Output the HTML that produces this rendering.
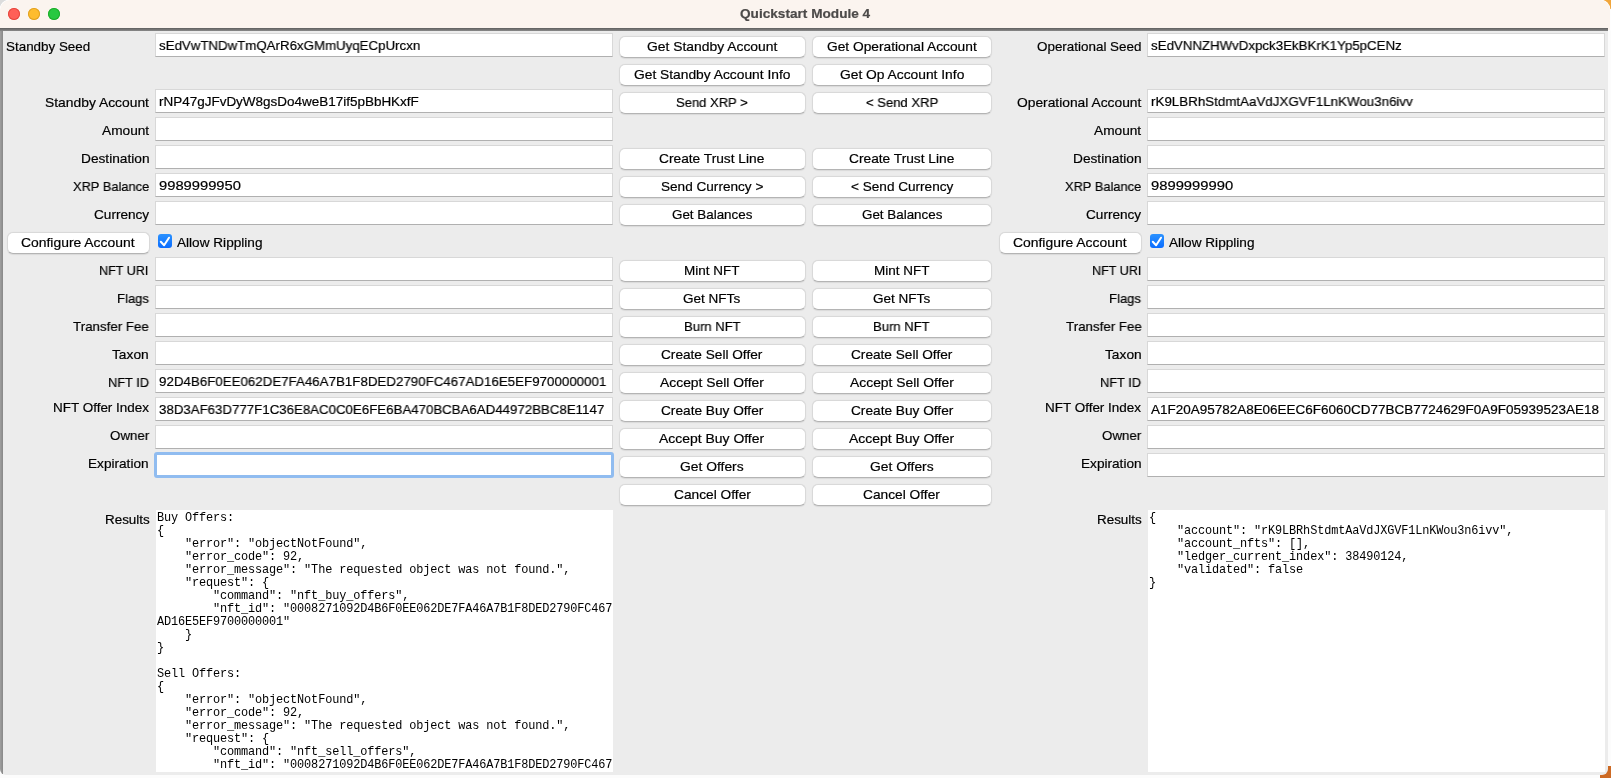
<!DOCTYPE html><html><head><meta charset="utf-8"><style>
*{margin:0;padding:0;box-sizing:border-box}
html,body{width:1611px;height:778px;overflow:hidden;background:#fcfcfc}
body{position:relative;font-family:"Liberation Sans",sans-serif;color:#000}
.a{position:absolute}
.t{position:absolute;line-height:normal;white-space:nowrap;transform-origin:0 0;will-change:transform;-webkit-text-stroke:0.2px currentColor}
.ent{position:absolute;height:24px;width:458px;background:#fff;border:1px solid #d8d8d8;border-bottom-color:#b0b0b0}
.btn{position:absolute;height:22px;background:#fff;border:1px solid #d9d9d9;border-bottom-color:#b4b4b4;border-radius:6px;box-shadow:0 0.5px 1px rgba(0,0,0,0.08)}
.mono{position:absolute;font-family:"Liberation Mono",monospace;font-size:11.9px;line-height:13px;white-space:pre;color:#000;overflow:hidden;will-change:transform}
</style></head><body>
<div class="a" style="left:1600px;top:0;width:11px;height:9px;background:#f1a63c"></div>
<div class="a" style="left:1600px;top:766px;width:11px;height:12px;background:#cd6a24"></div>
<div class="a" style="left:0;top:0;width:14px;height:14px;background:#dcdcdc"></div>
<div class="a" style="left:0;top:0;width:1610px;height:30px;background:#fbf4ef;border-radius:10px 10px 0 0;box-shadow:0 0 0 0.5px #fff"></div>
<div class="a" style="left:0;top:26px;width:1608px;height:749px;background:#ececec;border-radius:0 0 6px 6px;overflow:hidden">
<div class="a" style="left:0;top:0;width:1608px;height:2px;background:#fbf4ef"></div>
<div class="a" style="left:0;top:2px;width:1608px;height:3px;background:linear-gradient(#5e5e5e,#8a8a8a)"></div>
<div class="a" style="left:0;top:5px;width:3px;height:744px;background:linear-gradient(90deg,#a0a0a0,#888)"></div>
</div>
<div class="a" style="left:8px;top:8px;width:12px;height:12px;border-radius:50%;background:#ff5f57;box-shadow:inset 0 0 0 1px #e5483f"></div>
<div class="a" style="left:28px;top:8px;width:12px;height:12px;border-radius:50%;background:#febc2e;box-shadow:inset 0 0 0 1px #e0a123"></div>
<div class="a" style="left:48px;top:8px;width:12px;height:12px;border-radius:50%;background:#28c840;box-shadow:inset 0 0 0 1px #1dad2b"></div>
<div class="t" style="left:740.10px;top:6px;font-size:13px;font-weight:bold;color:#4c4a49;transform:scale(1.0479,1);transform-origin:0 11.77px;">Quickstart Module 4</div>
<div class="t" style="left:6.20px;top:39px;font-size:13.4px;color:#000;transform:scale(1.0014,1);transform-origin:0 12.13px;">Standby Seed</div>
<div class="ent" style="left:155px;top:33px"></div>
<div class="t" style="left:158.90px;top:38px;font-size:13.4px;color:#000;transform:scale(0.9917,1);transform-origin:0 12.13px;">sEdVwTNDwTmQArR6xGMmUyqECpUrcxn</div>
<div class="t" style="left:44.80px;top:95px;font-size:13.4px;color:#000;transform:scale(1.0341,1);transform-origin:0 12.13px;">Standby Account</div>
<div class="ent" style="left:155px;top:89px"></div>
<div class="t" style="left:158.90px;top:94px;font-size:13.4px;color:#000;transform:scale(1.0061,1);transform-origin:0 12.13px;">rNP47gJFvDyW8gsDo4weB17if5pBbHKxfF</div>
<div class="t" style="left:102.00px;top:123px;font-size:13.4px;color:#000;transform:scale(1.0217,1);transform-origin:0 12.13px;">Amount</div>
<div class="ent" style="left:155px;top:117px"></div>
<div class="t" style="left:80.90px;top:151px;font-size:13.4px;color:#000;transform:scale(1.0234,1);transform-origin:0 12.13px;">Destination</div>
<div class="ent" style="left:155px;top:145px"></div>
<div class="t" style="left:73.10px;top:179px;font-size:13.4px;color:#000;transform:scale(0.9602,1);transform-origin:0 12.13px;">XRP Balance</div>
<div class="ent" style="left:155px;top:173px"></div>
<div class="t" style="left:158.90px;top:178px;font-size:13.4px;color:#000;transform:scale(1.1001,1);transform-origin:0 12.13px;">9989999950</div>
<div class="t" style="left:94.00px;top:207px;font-size:13.4px;color:#000;transform:scale(1.0153,1);transform-origin:0 12.13px;">Currency</div>
<div class="ent" style="left:155px;top:201px"></div>
<div class="t" style="left:99.30px;top:263px;font-size:13.4px;color:#000;transform:scale(0.9393,1);transform-origin:0 12.13px;">NFT URI</div>
<div class="ent" style="left:155px;top:257px"></div>
<div class="t" style="left:117.00px;top:291px;font-size:13.4px;color:#000;transform:scale(0.9767,1);transform-origin:0 12.13px;">Flags</div>
<div class="ent" style="left:155px;top:285px"></div>
<div class="t" style="left:73.20px;top:319px;font-size:13.4px;color:#000;transform:scale(0.9946,1);transform-origin:0 12.13px;">Transfer Fee</div>
<div class="ent" style="left:155px;top:313px"></div>
<div class="t" style="left:112.30px;top:347px;font-size:13.4px;color:#000;transform:scale(1.0267,1);transform-origin:0 12.13px;">Taxon</div>
<div class="ent" style="left:155px;top:341px"></div>
<div class="t" style="left:107.90px;top:375px;font-size:13.4px;color:#000;transform:scale(0.9570,1);transform-origin:0 12.13px;">NFT ID</div>
<div class="ent" style="left:155px;top:369px"></div>
<div class="t" style="left:158.90px;top:374px;font-size:13.4px;color:#000;transform:scale(0.9947,1);transform-origin:0 12.13px;">92D4B6F0EE062DE7FA46A7B1F8DED2790FC467AD16E5EF9700000001</div>
<div class="t" style="left:52.90px;top:400px;font-size:13.4px;color:#000;transform:scale(1.0055,1);transform-origin:0 12.13px;">NFT Offer Index</div>
<div class="ent" style="left:155px;top:397px"></div>
<div class="t" style="left:158.90px;top:402px;font-size:13.4px;color:#000;transform:scale(0.9907,1);transform-origin:0 12.13px;">38D3AF63D777F1C36E8AC0C0E6FE6BA470BCBA6AD44972BBC8E1147</div>
<div class="t" style="left:109.80px;top:428px;font-size:13.4px;color:#000;transform:scale(0.9933,1);transform-origin:0 12.13px;">Owner</div>
<div class="ent" style="left:155px;top:425px"></div>
<div class="t" style="left:88.40px;top:456px;font-size:13.4px;color:#000;transform:scale(1.0168,1);transform-origin:0 12.13px;">Expiration</div>
<div class="a" style="left:154px;top:452px;width:460px;height:26px;border:3px solid #90bcf0;border-radius:3px;background:#fff"></div>
<div class="btn" style="left:7px;top:232px;width:143px"></div>
<div class="t" style="left:20.80px;top:235px;font-size:13.4px;color:#000;transform:scale(1.0373,1);transform-origin:0 12.13px;">Configure Account</div>
<div class="a" style="left:158px;top:234px;width:14px;height:14px;border-radius:3px;background:linear-gradient(#2b92ff,#0a6cff)"></div>
<svg class="a" style="left:158px;top:234px" width="14" height="14" viewBox="0 0 14 14"><path d="M2.8 7.8 L6.1 11.3 L11.0 3.7" fill="none" stroke="#fff" stroke-width="2" stroke-linecap="round" stroke-linejoin="round"/></svg>
<div class="t" style="left:176.80px;top:235px;font-size:13.4px;color:#000;transform:scale(1.0160,1);transform-origin:0 12.13px;">Allow Rippling</div>
<div class="t" style="left:104.60px;top:512px;font-size:13.4px;color:#000;transform:scale(1.0025,1);transform-origin:0 12.13px;">Results</div>
<div class="a" style="left:156px;top:510px;width:457px;height:262px;background:#fff;overflow:hidden"><div class="mono" style="left:1px;top:2.0px;letter-spacing:-0.130px">Buy Offers:
{
    &quot;error&quot;: &quot;objectNotFound&quot;,
    &quot;error_code&quot;: 92,
    &quot;error_message&quot;: &quot;The requested object was not found.&quot;,
    &quot;request&quot;: {
        &quot;command&quot;: &quot;nft_buy_offers&quot;,
        &quot;nft_id&quot;: &quot;0008271092D4B6F0EE062DE7FA46A7B1F8DED2790FC467
AD16E5EF9700000001&quot;
    }
}

Sell Offers:
{
    &quot;error&quot;: &quot;objectNotFound&quot;,
    &quot;error_code&quot;: 92,
    &quot;error_message&quot;: &quot;The requested object was not found.&quot;,
    &quot;request&quot;: {
        &quot;command&quot;: &quot;nft_sell_offers&quot;,
        &quot;nft_id&quot;: &quot;0008271092D4B6F0EE062DE7FA46A7B1F8DED2790FC467</div></div>
<div class="t" style="left:1037.00px;top:39px;font-size:13.4px;color:#000;transform:scale(1.0021,1);transform-origin:0 12.13px;">Operational Seed</div>
<div class="ent" style="left:1147px;top:33px"></div>
<div class="t" style="left:1150.90px;top:38px;font-size:13.4px;color:#000;transform:scale(0.9920,1);transform-origin:0 12.13px;">sEdVNNZHWvDxpck3EkBKrK1Yp5pCENz</div>
<div class="t" style="left:1016.70px;top:95px;font-size:13.4px;color:#000;transform:scale(1.0309,1);transform-origin:0 12.13px;">Operational Account</div>
<div class="ent" style="left:1147px;top:89px"></div>
<div class="t" style="left:1150.90px;top:94px;font-size:13.4px;color:#000;transform:scale(0.9974,1);transform-origin:0 12.13px;">rK9LBRhStdmtAaVdJXGVF1LnKWou3n6ivv</div>
<div class="t" style="left:1094.30px;top:123px;font-size:13.4px;color:#000;transform:scale(1.0217,1);transform-origin:0 12.13px;">Amount</div>
<div class="ent" style="left:1147px;top:117px"></div>
<div class="t" style="left:1073.20px;top:151px;font-size:13.4px;color:#000;transform:scale(1.0234,1);transform-origin:0 12.13px;">Destination</div>
<div class="ent" style="left:1147px;top:145px"></div>
<div class="t" style="left:1065.40px;top:179px;font-size:13.4px;color:#000;transform:scale(0.9602,1);transform-origin:0 12.13px;">XRP Balance</div>
<div class="ent" style="left:1147px;top:173px"></div>
<div class="t" style="left:1150.90px;top:178px;font-size:13.4px;color:#000;transform:scale(1.1028,1);transform-origin:0 12.13px;">9899999990</div>
<div class="t" style="left:1086.30px;top:207px;font-size:13.4px;color:#000;transform:scale(1.0153,1);transform-origin:0 12.13px;">Currency</div>
<div class="ent" style="left:1147px;top:201px"></div>
<div class="t" style="left:1091.60px;top:263px;font-size:13.4px;color:#000;transform:scale(0.9393,1);transform-origin:0 12.13px;">NFT URI</div>
<div class="ent" style="left:1147px;top:257px"></div>
<div class="t" style="left:1109.30px;top:291px;font-size:13.4px;color:#000;transform:scale(0.9767,1);transform-origin:0 12.13px;">Flags</div>
<div class="ent" style="left:1147px;top:285px"></div>
<div class="t" style="left:1065.50px;top:319px;font-size:13.4px;color:#000;transform:scale(0.9946,1);transform-origin:0 12.13px;">Transfer Fee</div>
<div class="ent" style="left:1147px;top:313px"></div>
<div class="t" style="left:1104.60px;top:347px;font-size:13.4px;color:#000;transform:scale(1.0267,1);transform-origin:0 12.13px;">Taxon</div>
<div class="ent" style="left:1147px;top:341px"></div>
<div class="t" style="left:1100.20px;top:375px;font-size:13.4px;color:#000;transform:scale(0.9570,1);transform-origin:0 12.13px;">NFT ID</div>
<div class="ent" style="left:1147px;top:369px"></div>
<div class="t" style="left:1045.20px;top:400px;font-size:13.4px;color:#000;transform:scale(1.0055,1);transform-origin:0 12.13px;">NFT Offer Index</div>
<div class="ent" style="left:1147px;top:397px"></div>
<div class="t" style="left:1150.90px;top:402px;font-size:13.4px;color:#000;transform:scale(1.0062,1);transform-origin:0 12.13px;">A1F20A95782A8E06EEC6F6060CD77BCB7724629F0A9F05939523AE18</div>
<div class="t" style="left:1102.10px;top:428px;font-size:13.4px;color:#000;transform:scale(0.9933,1);transform-origin:0 12.13px;">Owner</div>
<div class="ent" style="left:1147px;top:425px"></div>
<div class="t" style="left:1080.70px;top:456px;font-size:13.4px;color:#000;transform:scale(1.0168,1);transform-origin:0 12.13px;">Expiration</div>
<div class="ent" style="left:1147px;top:453px"></div>
<div class="btn" style="left:999px;top:232px;width:143px"></div>
<div class="t" style="left:1012.80px;top:235px;font-size:13.4px;color:#000;transform:scale(1.0373,1);transform-origin:0 12.13px;">Configure Account</div>
<div class="a" style="left:1150px;top:234px;width:14px;height:14px;border-radius:3px;background:linear-gradient(#2b92ff,#0a6cff)"></div>
<svg class="a" style="left:1150px;top:234px" width="14" height="14" viewBox="0 0 14 14"><path d="M2.8 7.8 L6.1 11.3 L11.0 3.7" fill="none" stroke="#fff" stroke-width="2" stroke-linecap="round" stroke-linejoin="round"/></svg>
<div class="t" style="left:1168.80px;top:235px;font-size:13.4px;color:#000;transform:scale(1.0160,1);transform-origin:0 12.13px;">Allow Rippling</div>
<div class="t" style="left:1096.90px;top:512px;font-size:13.4px;color:#000;transform:scale(1.0025,1);transform-origin:0 12.13px;">Results</div>
<div class="a" style="left:1148px;top:510px;width:457px;height:262px;background:#fff;overflow:hidden"><div class="mono" style="left:1px;top:2.0px;letter-spacing:-0.130px">{
    &quot;account&quot;: &quot;rK9LBRhStdmtAaVdJXGVF1LnKWou3n6ivv&quot;,
    &quot;account_nfts&quot;: [],
    &quot;ledger_current_index&quot;: 38490124,
    &quot;validated&quot;: false
}</div></div>
<div class="btn" style="left:619px;top:36px;width:187px"></div>
<div class="btn" style="left:812px;top:36px;width:180px"></div>
<div class="t" style="left:646.80px;top:39px;font-size:13.4px;color:#000;transform:scale(1.0358,1);transform-origin:0 12.13px;">Get Standby Account</div>
<div class="t" style="left:826.80px;top:39px;font-size:13.4px;color:#000;transform:scale(1.0261,1);transform-origin:0 12.13px;">Get Operational Account</div>
<div class="btn" style="left:619px;top:64px;width:187px"></div>
<div class="btn" style="left:812px;top:64px;width:180px"></div>
<div class="t" style="left:633.75px;top:67px;font-size:13.4px;color:#000;transform:scale(1.0299,1);transform-origin:0 12.13px;">Get Standby Account Info</div>
<div class="t" style="left:839.50px;top:67px;font-size:13.4px;color:#000;transform:scale(1.0309,1);transform-origin:0 12.13px;">Get Op Account Info</div>
<div class="btn" style="left:619px;top:92px;width:187px"></div>
<div class="btn" style="left:812px;top:92px;width:180px"></div>
<div class="t" style="left:676.10px;top:95px;font-size:13.4px;color:#000;transform:scale(0.9720,1);transform-origin:0 12.13px;">Send XRP &gt;</div>
<div class="t" style="left:865.55px;top:95px;font-size:13.4px;color:#000;transform:scale(0.9752,1);transform-origin:0 12.13px;">&lt; Send XRP</div>
<div class="btn" style="left:619px;top:148px;width:187px"></div>
<div class="btn" style="left:812px;top:148px;width:180px"></div>
<div class="t" style="left:659.30px;top:151px;font-size:13.4px;color:#000;transform:scale(1.0255,1);transform-origin:0 12.13px;">Create Trust Line</div>
<div class="t" style="left:849.00px;top:151px;font-size:13.4px;color:#000;transform:scale(1.0255,1);transform-origin:0 12.13px;">Create Trust Line</div>
<div class="btn" style="left:619px;top:176px;width:187px"></div>
<div class="btn" style="left:812px;top:176px;width:180px"></div>
<div class="t" style="left:660.80px;top:179px;font-size:13.4px;color:#000;transform:scale(1.0145,1);transform-origin:0 12.13px;">Send Currency &gt;</div>
<div class="t" style="left:850.50px;top:179px;font-size:13.4px;color:#000;transform:scale(1.0145,1);transform-origin:0 12.13px;">&lt; Send Currency</div>
<div class="btn" style="left:619px;top:204px;width:187px"></div>
<div class="btn" style="left:812px;top:204px;width:180px"></div>
<div class="t" style="left:671.80px;top:207px;font-size:13.4px;color:#000;transform:scale(0.9996,1);transform-origin:0 12.13px;">Get Balances</div>
<div class="t" style="left:861.50px;top:207px;font-size:13.4px;color:#000;transform:scale(0.9996,1);transform-origin:0 12.13px;">Get Balances</div>
<div class="btn" style="left:619px;top:260px;width:187px"></div>
<div class="btn" style="left:812px;top:260px;width:180px"></div>
<div class="t" style="left:684.30px;top:263px;font-size:13.4px;color:#000;transform:scale(1.0059,1);transform-origin:0 12.13px;">Mint NFT</div>
<div class="t" style="left:874.00px;top:263px;font-size:13.4px;color:#000;transform:scale(1.0059,1);transform-origin:0 12.13px;">Mint NFT</div>
<div class="btn" style="left:619px;top:288px;width:187px"></div>
<div class="btn" style="left:812px;top:288px;width:180px"></div>
<div class="t" style="left:683.40px;top:291px;font-size:13.4px;color:#000;transform:scale(1.0109,1);transform-origin:0 12.13px;">Get NFTs</div>
<div class="t" style="left:873.10px;top:291px;font-size:13.4px;color:#000;transform:scale(1.0109,1);transform-origin:0 12.13px;">Get NFTs</div>
<div class="btn" style="left:619px;top:316px;width:187px"></div>
<div class="btn" style="left:812px;top:316px;width:180px"></div>
<div class="t" style="left:683.65px;top:319px;font-size:13.4px;color:#000;transform:scale(0.9761,1);transform-origin:0 12.13px;">Burn NFT</div>
<div class="t" style="left:873.35px;top:319px;font-size:13.4px;color:#000;transform:scale(0.9761,1);transform-origin:0 12.13px;">Burn NFT</div>
<div class="btn" style="left:619px;top:344px;width:187px"></div>
<div class="btn" style="left:812px;top:344px;width:180px"></div>
<div class="t" style="left:661.30px;top:347px;font-size:13.4px;color:#000;transform:scale(1.0185,1);transform-origin:0 12.13px;">Create Sell Offer</div>
<div class="t" style="left:851.00px;top:347px;font-size:13.4px;color:#000;transform:scale(1.0185,1);transform-origin:0 12.13px;">Create Sell Offer</div>
<div class="btn" style="left:619px;top:372px;width:187px"></div>
<div class="btn" style="left:812px;top:372px;width:180px"></div>
<div class="t" style="left:660.00px;top:375px;font-size:13.4px;color:#000;transform:scale(1.0369,1);transform-origin:0 12.13px;">Accept Sell Offer</div>
<div class="t" style="left:849.70px;top:375px;font-size:13.4px;color:#000;transform:scale(1.0369,1);transform-origin:0 12.13px;">Accept Sell Offer</div>
<div class="btn" style="left:619px;top:400px;width:187px"></div>
<div class="btn" style="left:812px;top:400px;width:180px"></div>
<div class="t" style="left:660.80px;top:403px;font-size:13.4px;color:#000;transform:scale(1.0209,1);transform-origin:0 12.13px;">Create Buy Offer</div>
<div class="t" style="left:850.50px;top:403px;font-size:13.4px;color:#000;transform:scale(1.0209,1);transform-origin:0 12.13px;">Create Buy Offer</div>
<div class="btn" style="left:619px;top:428px;width:187px"></div>
<div class="btn" style="left:812px;top:428px;width:180px"></div>
<div class="t" style="left:659.40px;top:431px;font-size:13.4px;color:#000;transform:scale(1.0412,1);transform-origin:0 12.13px;">Accept Buy Offer</div>
<div class="t" style="left:849.10px;top:431px;font-size:13.4px;color:#000;transform:scale(1.0412,1);transform-origin:0 12.13px;">Accept Buy Offer</div>
<div class="btn" style="left:619px;top:456px;width:187px"></div>
<div class="btn" style="left:812px;top:456px;width:180px"></div>
<div class="t" style="left:680.15px;top:459px;font-size:13.4px;color:#000;transform:scale(1.0345,1);transform-origin:0 12.13px;">Get Offers</div>
<div class="t" style="left:869.85px;top:459px;font-size:13.4px;color:#000;transform:scale(1.0345,1);transform-origin:0 12.13px;">Get Offers</div>
<div class="btn" style="left:619px;top:484px;width:187px"></div>
<div class="btn" style="left:812px;top:484px;width:180px"></div>
<div class="t" style="left:673.55px;top:487px;font-size:13.4px;color:#000;transform:scale(1.0257,1);transform-origin:0 12.13px;">Cancel Offer</div>
<div class="t" style="left:863.25px;top:487px;font-size:13.4px;color:#000;transform:scale(1.0257,1);transform-origin:0 12.13px;">Cancel Offer</div>
</body></html>
